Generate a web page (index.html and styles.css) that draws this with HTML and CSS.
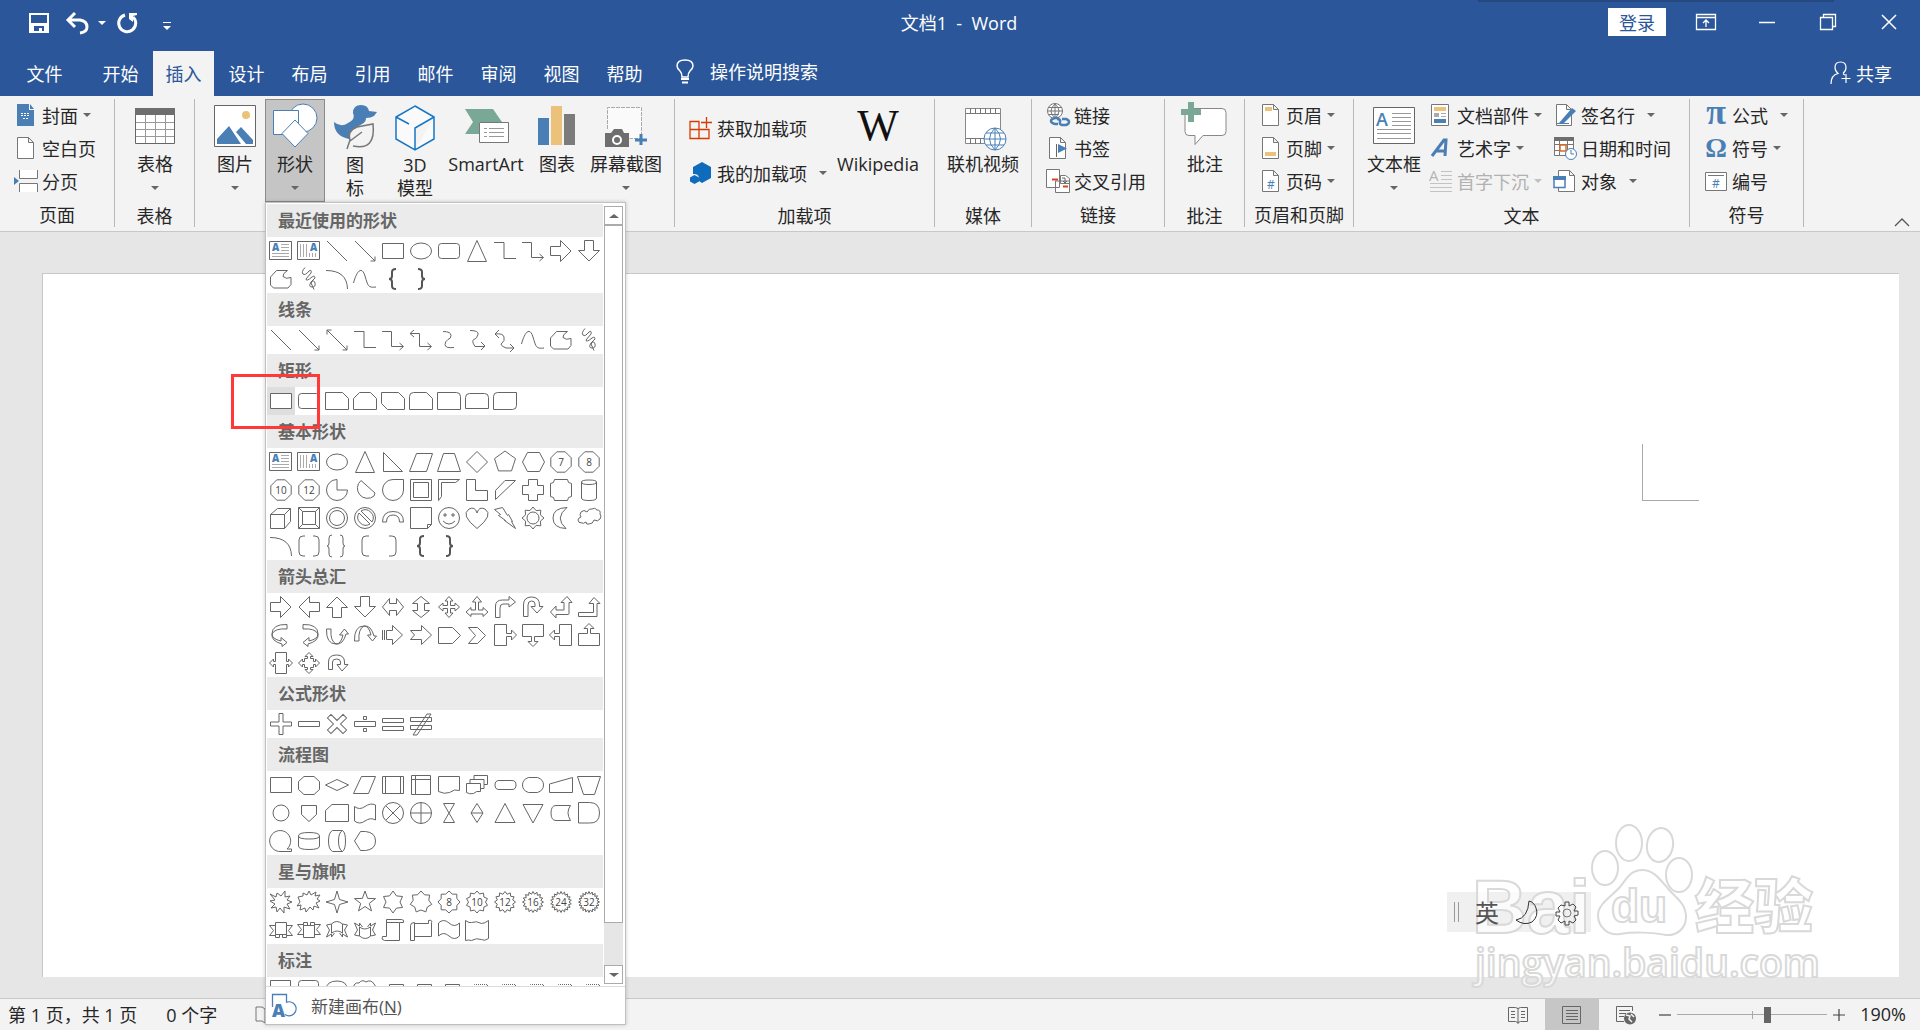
FILE: index.html
```
<!DOCTYPE html>
<html lang="zh-CN">
<head>
    <meta charset="UTF-8">
    <meta name="viewport" content="width=device-width, initial-scale=1.0">
    <title>文档1 - Word</title>
    <link rel="stylesheet" href="styles.css">
</head>
<body>
    <header class="titlebar">
        <div class="quick">
            <button type="button" aria-label="保存"><svg width="22" height="22" viewBox="0 0 22 22"><path d="M1 1h20v20H1z" fill="#fff"/><path d="M3 3h16v8H3zM6 14h10v5h-2v-3h-3v3H6z" fill="#2b579a"/></svg></button>
            <button type="button" aria-label="撤消"><svg width="24" height="22" viewBox="0 0 24 22"><path d="M2 8h12q7 1 7 7 0 5-7 6M9 1L2 8l7 7" fill="none" stroke="#fff" stroke-width="3"/></svg></button>
            <button type="button" class="narrow" aria-label="撤消列表"><span class="arrow"></span></button>
            <button type="button" aria-label="重复"><svg width="22" height="22" viewBox="0 0 22 22"><path d="M8 3A8.500 8.500 0 1 0 16 5" fill="none" stroke="#fff" stroke-width="3"/><path d="M12 1h8v2l-4 1v6l-4-3z" fill="#fff"/></svg></button>
            <button type="button" class="custom" aria-label="自定义快速访问工具栏"><svg width="10" height="10" viewBox="0 0 10 10"><path d="M1 1h8v1H1zM1 5h8L5 9z" fill="#fff"/></svg></button>
        </div>
        <div class="title">文档1&nbsp; -&nbsp; Word</div>
        <div class="window-buttons">
            <button type="button" class="login">登录</button>
            <button type="button" aria-label="功能区显示选项"><svg width="20" height="16" viewBox="0 0 20 16"><path d="M.5.500h19v15H.5zM.5 3.500h19M10 13V6M7 9l3-3 3 3" fill="none" stroke="#fff" stroke-width="1.300"/></svg></button>
            <button type="button" aria-label="最小化"><svg width="16" height="16" viewBox="0 0 16 16"><path d="M0 8.500h16" stroke="#fff" stroke-width="1.500"/></svg></button>
            <button type="button" aria-label="还原"><svg width="16" height="16" viewBox="0 0 16 16"><path d="M.5 3.500h12v12H.5zM3.500 3.500v-3h12v12h-3" fill="none" stroke="#fff" stroke-width="1.300"/></svg></button>
            <button type="button" aria-label="关闭"><svg width="16" height="16" viewBox="0 0 16 16"><path d="M1 1l14 14M15 1L1 15" stroke="#fff" stroke-width="1.500"/></svg></button>
        </div>
        <div class="top-shadow"></div>
    </header>

    <nav class="tabs">
        <button type="button" class="file">文件</button>
        <button type="button">开始</button>
        <button type="button" class="active">插入</button>
        <button type="button">设计</button>
        <button type="button">布局</button>
        <button type="button">引用</button>
        <button type="button">邮件</button>
        <button type="button">审阅</button>
        <button type="button">视图</button>
        <button type="button">帮助</button>
        <label class="search">
            <svg width="18" height="26" viewBox="0 0 18 26"><path d="M6 18q0-4-2-6-3-3-3-5 0-6 8-6t8 6q0 2-3 5-2 2-2 6z" fill="none" stroke="#fff" stroke-width="1.500"/><path d="M5 20h8M6 23.500h6" stroke="#fff" stroke-width="2"/></svg>
            <input type="text" placeholder="操作说明搜索" aria-label="操作说明搜索">
        </label>
        <button type="button" class="share"><svg width="22" height="24" viewBox="0 0 22 24"><path d="M1 23q0-9 7-10.500Q5 10 5 6.500 5 1 10.500 1T16 6.500q0 3.500-3 6M16 13v9M11.500 17.500h9M13 13l2 1" fill="none" stroke="#fff" stroke-width="1.200"/></svg>共享</button>
    </nav>

    <section class="ribbon">
        <div class="group pages">
            <div class="content">
                <div class="stack">
                    <button type="button"><svg class="small" viewBox="0 0 24 24"><path d="M3 1h12v6h5v16H3z" fill="#4a7fb5"/><path d="M16 1l4 5h-4z" fill="#4a7fb5"/><path d="M7 10.500h9M7 12.500h9M9 15.500h6" stroke="#fff" stroke-dasharray="2 1"/></svg>封面<span class="arrow"></span></button>
                    <button type="button"><svg class="small" viewBox="0 0 24 24"><path d="M3.500 1.500h11l5 5v16h-16zM14.500 1.500v5h5" class="sheet"/></svg>空白页</button>
                    <button type="button"><svg class="small" viewBox="0 0 24 24"><path d="M5.500 1v8.500h18V1M5.500 23v-8.500h18V23" class="sheet"/><path d="M0 8l5 4-5 4z" fill="#4a7fb5"/></svg>分页</button>
                </div>
            </div>
            <div class="caption">页面</div>
        </div>

        <div class="group table">
            <div class="content">
                <button type="button" class="big"><svg class="large" viewBox="0 0 48 48"><path d="M4.500 5.500h39v35h-39z" fill="#fff" stroke="#666"/><path d="M5 19.500h38M5 26.500h38M5 33.500h38M14.500 12v28M24.500 12v28M34.500 12v28" stroke="#999"/><path d="M4 5h40v7H4z" fill="#6e6e6e"/></svg>表格<span class="arrow"></span></button>
            </div>
            <div class="caption">表格</div>
        </div>

        <div class="group illustrations">
            <div class="content">
                <button type="button" class="big"><svg class="large" viewBox="0 0 48 48"><path d="M3.500 2.500h41v41h-41z" fill="#fff" stroke="#666"/><circle cx="35" cy="12" r="4" fill="#ecc27b"/><path d="M6 41V36L18 23l12 18zM25 29l5-5 12 13v4h-7z" fill="#4a7fb5"/></svg>图片<span class="arrow"></span></button>
                <div class="dropdown">
                    <button type="button" class="big open"><svg class="large" viewBox="0 0 48 48"><circle cx="32" cy="15" r="14" class="blueline"/><path d="M2.500 7.500h25v24h-25z" class="blueline"/><path d="M24 17l13 13.500L24 44 11 30.500z" class="blueline"/></svg>形状<span class="arrow"></span></button>
                    <div class="menu">
                        <div class="menu-main">
                            <div class="gallery" id="gallery"></div>
                            <div class="scrollbar">
                                <button type="button" aria-label="向上滚动"><span class="arrow up"></span></button>
                                <div class="thumb"></div>
                                <button type="button" aria-label="向下滚动"><span class="arrow"></span></button>
                            </div>
                        </div>
                        <button type="button" class="canvas"><svg width="26" height="26" viewBox="0 0 26 26"><path d="M1.500 14V1.500h14V9M15 9.500a7 7 0 1 1-1 12" fill="none" stroke="#4a7fb5" stroke-width="1.300"/><text x="1" y="24" font-size="18" font-weight="800" fill="#4a7fb5">A</text></svg><span>新建画布(<u>N</u>)</span></button>
                        <div class="marker"></div>
                    </div>
                </div>
                <button type="button" class="big wrap"><svg class="large" viewBox="0 0 48 48"><path d="M22 8q0-8 8-8 7 0 8 6l8 1-3 4q-3 2-8 2 0 4-4 6-8 4-13 15Q3 31 3 17q7 6 14 1 8-4 5-10z" fill="#4a7fb5"/><path d="M16 44l3-9q-3-9 7-13l16-3q3 27-20 22M19 36l12-9" fill="#f3f3f3" stroke="#777" stroke-width="1.500"/></svg>图<br>标</button>
                <button type="button" class="big wrap"><svg class="large" viewBox="0 0 48 48"><path d="M24 1l19 11v22L24 45 5 34V12zM43 12L24 23v22M5 12l13 7" fill="#fafafa" stroke="#1677c7" stroke-width="1.500"/></svg>3D<br>模型</button>
                <button type="button" class="big smart"><svg class="large" viewBox="0 0 48 48"><path d="M3 6h28l9 13H17v12H3l8-12z" fill="#79a996"/><path d="M17.500 19.500h29v20h-29z" fill="#fff" stroke="#777"/><path d="M22 25.500h3M22 29.500h3M22 33.500h3M27 25.500h15M27 29.500h15M27 33.500h15" stroke="#999"/></svg>SmartArt</button>
                <button type="button" class="big"><svg class="large" viewBox="0 0 48 48"><path d="M5 15h11v27H5z" fill="#4a7fb5"/><path d="M18 3h11v39H18z" fill="#ecc27b"/><path d="M31 11h11v31H31z" fill="#7b7b7b"/></svg>图表</button>
                <button type="button" class="big shot"><svg class="large" viewBox="0 0 48 48"><path d="M5.500 26V4.500h34v31h-12" fill="#fafafa" stroke="#aaa" stroke-dasharray="4 1"/><path d="M3 30h6l3-4h8l2 4h5v14H3z" fill="#6e6e6e"/><circle cx="15" cy="37" r="4" fill="#6e6e6e" stroke="#fff" stroke-width="2"/><path d="M33 37h12M39 31v11" stroke="#4a7fb5" stroke-width="3"/></svg>屏幕截图<span class="arrow"></span></button>
            </div>
            <div class="caption"></div>
        </div>

        <div class="group addins">
            <div class="content">
                <div class="stack loose">
                    <button type="button"><svg class="small" viewBox="0 0 24 24"><path d="M1 5.500h9v17H1zM1 13.500h19v9H1M17.500 1v11M12 6.500h11" fill="none" stroke="#d83b01" stroke-width="1.300"/></svg>获取加载项</button>
                    <button type="button"><svg class="small" viewBox="0 0 24 24"><path d="M13 1l9 5v11l-9 5-3-2q1-8-6-7V6z" fill="#0f6cbd"/><path d="M5.500 14l4.500 2.500v4L5.500 23 1 20.500v-4z" fill="#0f6cbd"/></svg>我的加载项<span class="arrow far"></span></button>
                </div>
                <button type="button" class="big wiki"><svg class="large" viewBox="0 0 48 48"><text x="24" y="37" text-anchor="middle" class="w">W</text></svg>Wikipedia</button>
            </div>
            <div class="caption">加载项</div>
        </div>

        <div class="group media">
            <div class="content">
                <button type="button" class="big"><svg class="large" viewBox="0 0 48 48"><path d="M6.500 5.500h35v35h-35z" fill="#fff" stroke="#888"/><path d="M6.500 10.500h35M6.500 35.500h20M11.500 5v5M16.500 5v5M21.500 5v5M26.500 5v5M31.500 5v5M36.500 5v5M11.500 36v5M16.500 36v5M21.500 36v5" stroke="#777"/><circle cx="36" cy="36" r="11" fill="#fff" stroke="#4a7fb5"/><path d="M25 36h22M36 25v22M36 25q-11 11 0 22M36 25q11 11 0 22M27 30h18M27 42h18" fill="none" stroke="#4a7fb5"/></svg>联机视频</button>
            </div>
            <div class="caption">媒体</div>
        </div>

        <div class="group links">
            <div class="content">
                <div class="stack">
                    <button type="button"><svg class="small" viewBox="0 0 24 24"><circle cx="9" cy="8" r="7.500" class="sheet"/><path d="M2 8h15M9 1v15M3 4.500h12M3 11.500h10M9 1q-8 7 0 14M9 1q8 7 0 14" fill="none" stroke="#777"/><path d="M12 21H9q-4-1-4-3t4-3h4M16 16h4q3 1 3 3t-3 3h-4q-3-1-2-3M11 16q4 0 3 3" fill="none" stroke="#4a7fb5" stroke-width="2.500"/></svg>链接</button>
                    <button type="button"><svg class="small" viewBox="0 0 24 24"><path d="M3.500 1.500h11l5 5v16h-16zM14.500 1.500v5h5" class="sheet"/><path d="M10.500 8v13" stroke="#666"/><path d="M12 8l9 4.500-9 4.500z" fill="#4a7fb5"/></svg>书签</button>
                    <button type="button"><svg class="small" viewBox="0 0 24 24"><path d="M.5.500h13v18H.5zM9.500 12h14v11.500h-14zM14.500 6.500h5l4 3v5h-9z" class="sheet"/><path d="M6 10.500h6M17 17.500h5" stroke="#d24726" stroke-width="2"/><path d="M16 9h3v5M17 12l2 2 2-2" fill="none" stroke="#666"/></svg>交叉引用</button>
                </div>
            </div>
            <div class="caption">链接</div>
        </div>

        <div class="group comments">
            <div class="content">
                <button type="button" class="big"><svg class="large" viewBox="0 0 48 48"><path d="M7 5.500h34q4 0 4 4v19q0 4-4 4H22l-8 9v-9H8q-4 0-4-4V10" fill="#fff" stroke="#888"/><path d="M7-1h6v7h7v6h-7v7H7v-7H0V6h7z" fill="#79a996"/></svg>批注</button>
            </div>
            <div class="caption">批注</div>
        </div>

        <div class="group headers">
            <div class="content">
                <div class="stack">
                    <button type="button"><svg class="small" viewBox="0 0 24 24"><path d="M4.500 1.500h11l5 5v16h-16zM15.500 1.500v5h5" class="sheet"/><path d="M7 4h7v4H7z" fill="#ecc27b"/></svg>页眉<span class="arrow"></span></button>
                    <button type="button"><svg class="small" viewBox="0 0 24 24"><path d="M4.500 1.500h11l5 5v16h-16zM15.500 1.500v5h5" class="sheet"/><path d="M7 16h11v4H7z" fill="#ecc27b"/></svg>页脚<span class="arrow"></span></button>
                    <button type="button"><svg class="small" viewBox="0 0 24 24"><path d="M4.500 1.500h11l5 5v16h-16zM15.500 1.500v5h5" class="sheet"/><text x="9" y="20" font-size="12" fill="#4a7fb5">#</text></svg>页码<span class="arrow"></span></button>
                </div>
            </div>
            <div class="caption">页眉和页脚</div>
        </div>

        <div class="group texts">
            <div class="content">
                <button type="button" class="big"><svg class="large" viewBox="0 0 48 48"><path d="M3.500 4.500h41v36h-41z" fill="#fff" stroke="#666"/><path d="M22 10.500h19M22 14.500h19M22 18.500h19M22 22.500h19M7 26.500h34M7 30.500h34M7 35.500h34" stroke="#999"/><text x="6" y="23" font-size="18" font-weight="600" fill="#4a7fb5">A</text></svg>文本框<span class="arrow"></span></button>
                <div class="stack parts">
                    <button type="button"><svg class="small" viewBox="0 0 24 24"><path d="M2.500 1.500h17v21h-17z" class="sheet"/><path d="M5 4h12v4H5z" fill="#ecc27b"/><path d="M5 10h5v4H5z" fill="#aaa"/><path d="M12 10.500h5M12 13.500h5" stroke="#aaa"/><path d="M5 16h12v4H5z" fill="#4a7fb5"/></svg>文档部件<span class="arrow"></span></button>
                    <button type="button"><svg class="small" viewBox="0 0 24 24"><path d="M3 20L15 4h2l-1 16M7 15h9" fill="none" stroke="#4a7fb5" stroke-width="3"/></svg>艺术字<span class="arrow"></span></button>
                    <button type="button" class="off" disabled><svg class="small" viewBox="0 0 24 24"><path d="M12 2.500h11M12 6.500h11M12 10.500h11M1 14.500h22M1 18.500h22M1 22.500h22" stroke="#c3c3c3"/><text x="0" y="12" font-size="15" fill="#b5b5b5">A</text></svg>首字下沉<span class="arrow"></span></button>
                </div>
                <div class="stack">
                    <button type="button"><svg class="small" viewBox="0 0 24 24"><path d="M3.500 1.500h10l5 5v16h-15zM13.500 1.500v5h5" class="sheet"/><path d="M6 20L19 5l4 3-13 13z" fill="#4a7fb5"/><path d="M4 20.500h12" stroke="#4a7fb5"/></svg>签名行<span class="arrow far"></span></button>
                    <button type="button"><svg class="small" viewBox="0 0 24 24"><path d="M1.500 3.500h19v16h-19zM1.500 8.500h19M1.500 14.500h19M6.500 4v16M14.500 4v16" class="sheet"/><path d="M1 1h20v4H1z" fill="#6e6e6e"/><path d="M7 9h6v6H7z" fill="#fff" stroke="#d86b28" stroke-width="1.500"/><circle cx="18" cy="18" r="5.500" fill="#fff" stroke="#4a7fb5"/><path d="M18 14v4h3" fill="none" stroke="#4a7fb5"/></svg>日期和时间</button>
                    <button type="button"><svg class="small" viewBox="0 0 24 24"><path d="M5.500 1.500h11l5 5v16h-16zM16.500 1.500v5h5" class="sheet"/><path d="M1 8.500h11v10H1z" fill="#fff" stroke="#4a7fb5" stroke-width="1.500"/><path d="M0 7h13v4H0z" fill="#4a7fb5"/></svg>对象<span class="arrow far"></span></button>
                </div>
            </div>
            <div class="caption">文本</div>
        </div>

        <div class="group symbols">
            <div class="content">
                <div class="stack">
                    <button type="button"><svg class="small" viewBox="0 0 24 24"><text x="12" y="21" text-anchor="middle" class="greek">π</text></svg>公式<span class="arrow far"></span></button>
                    <button type="button"><svg class="small" viewBox="0 0 24 24"><text x="12" y="21" text-anchor="middle" class="greek omega">Ω</text></svg>符号<span class="arrow"></span></button>
                    <button type="button"><svg class="small" viewBox="0 0 24 24"><path d="M1.500 3.500h21v18h-21zM4 6.500h16" class="sheet"/><text x="8" y="19" font-size="12" fill="#4a7fb5">#</text></svg>编号</button>
                </div>
            </div>
            <div class="caption">符号</div>
        </div>

        <button type="button" class="collapse" aria-label="折叠功能区"><svg width="16" height="10" viewBox="0 0 16 10"><path d="M1 9l7-7 7 7" fill="none" stroke="#555" stroke-width="1.300"/></svg></button>
    </section>

    <main class="workspace">
        <div class="page">
            <div class="corner"></div>
        </div>
        <svg class="watermark" width="390" height="180" viewBox="0 0 390 180">
            <path d="M7 77h144v40H7z" fill="#f0f0f0"/>
            <path d="M14.500 87v20M18.500 87v20" stroke="#999"/>
            <g class="logo">
                <text x="32" y="118" font-size="76">Bai</text>
                <ellipse cx="165" cy="53" rx="13" ry="17"/>
                <ellipse cx="189" cy="28" rx="13" ry="18"/>
                <ellipse cx="220" cy="30" rx="13" ry="17" transform="rotate(10 220 30)"/>
                <ellipse cx="239" cy="60" rx="13" ry="17"/>
                <path d="M202 55C215 55 221 66 230 76 238 84 246 90 246 102 246 114 236 121 226 120 212 117 192 117 180 119 168 121 158 112 158 100 158 89 172 81 180 72 187 63 191 55 202 55Z"/>
                <text x="171" y="107" font-size="46">du</text>
                <text x="255" y="113" font-size="59" class="cjk">经验</text>
                <text x="35" y="162" font-size="39" class="site">jingyan.baidu.com</text>
            </g>
            <text x="35" y="107" font-size="24" fill="#555">英</text>
            <path d="M89 86q-1 17-13 19 8 6 16 2 7-6 4-14-2-6-7-7z" fill="none" stroke="#333"/>
            <path d="M125 87h4v4l4-2 3 3-2 4h4v4l-4 1 2 4-3 3-4-2v4h-4v-4l-4 2-3-3 2-4h-4v-4h4l-2-4 3-3 4 1z" fill="none" stroke="#444"/>
            <circle cx="127" cy="98" r="4" fill="none" stroke="#777"/>
        </svg>
    </main>

    <footer class="status">
        <span>第 1 页，共 1 页</span>
        <span class="words">0 个字</span>
        <svg width="20" height="18" viewBox="0 0 20 18"><path d="M1 1h6l3 2 3-2h6v14h-6l-3 2-3-2H1zM10 3v14" fill="none" stroke="#777"/></svg>
        <div class="views">
            <button type="button" aria-label="阅读视图"><svg width="20" height="18" viewBox="0 0 20 18"><path d="M.5 1.500h7l2.500 1 2.500-1h7v14h-7l-2.500 1-2.500-1h-7zM10 2v16M3 5.500h4M3 8.500h4M3 11.500h4M13 5.500h4M13 8.500h4M13 11.500h4" fill="none" stroke="#666"/></svg></button>
            <button type="button" class="current" aria-label="页面视图"><svg width="20" height="18" viewBox="0 0 20 18"><path d="M.5.500h18v17H.5zM4 4.500h12M4 7.500h12M4 10.500h12M4 13.500h12" fill="none" stroke="#666"/></svg></button>
            <button type="button" aria-label="Web 版式视图"><svg width="20" height="20" viewBox="0 0 20 20"><path d="M8 16.500H.5v-15h16V6M3 5.500h11M3 8.500h7M3 11.500h5" fill="none" stroke="#666"/><circle cx="14" cy="13.500" r="6" fill="#666"/><path d="M10 10l4 1-1 3 3 3M15 9l3 3" fill="none" stroke="#f3f3f3" stroke-width="1.500"/></svg></button>
        </div>
        <button type="button" class="step" aria-label="缩小"><svg width="12" height="12" viewBox="0 0 12 12"><path d="M0 6h12" stroke="#444" stroke-width="1.200"/></svg></button>
        <input type="range" class="zoom" min="0" max="100" value="61" aria-label="显示比例">
        <button type="button" class="step" aria-label="放大"><svg width="12" height="12" viewBox="0 0 12 12"><path d="M0 6h12M6 0v12" stroke="#444" stroke-width="1.200"/></svg></button>
        <span class="percent">190%</span>
    </footer>

    <script>
        // Every shape is drawn in a 28 x 28 cell
        function num(n) {
            return '<text x="14" y="18" class="num">' + n + '</text>';
        }

        function path(d) {
            return '<path d="' + d + '"/>';
        }

        function polygon(n, r, start) {
            return star(n, r, r * Math.cos(Math.PI / n), start);
        }

        function star(n, outer, inner, start) {
            let d = '';
            for (let i = 0; i < n * 2; i++) {
                const r = i % 2 ? inner : outer;
                const a = (start || 0) - Math.PI / 2 + i * Math.PI / n;
                d += (i ? 'L' : 'M') + (14 + r * Math.cos(a)).toFixed(1) + ' ' + (14 + r * Math.sin(a)).toFixed(1);
            }
            return d + 'Z';
        }

        function turn(d, angle) {
            return '<path transform="rotate(' + angle + ' 14 14)" d="' + d + '"/>';
        }

        function flip(d) {
            return '<path transform="matrix(-1 0 0 1 28 0)" d="' + d + '"/>';
        }

        const textH = path('M2.5 4.500h22v18h-22z') + '<path class="light" d="M14 7.500h8M14 10.500h8M14 13.500h8M5 16.500h17M5 19.500h17"/><text x="5" y="14" class="letter">A</text>';
        const textV = path('M2.5 4.500h22v18h-22z') + '<path class="light" d="M5.5 7v13M8.500 7v13M11.500 7v13M14.500 16v4M17.500 16v4M20.500 16v4"/><text x="15" y="14" class="letter">A</text>';
        const line = 'M4 4L24 24';
        const lineArrow = 'M4 4L24 24M24 19.500V24H19.500';
        const rect = 'M3.5 6.500h21v15h-21z';
        const ellipse = 'M3.500 14a10.500 8 0 1 0 21 0a10.500 8 0 1 0-21 0z';
        const round = 'M6.500 6.500h15q3 0 3 3v9q0 3-3 3h-15q-3 0-3-3v-9q0-3 3-3z';
        const triangle = 'M14 3.500L23.500 24.500h-19z';
        const elbow = 'M3 5.500h10v16h12';
        const elbowArrow = 'M3 5.500h9.500v15H24M20.500 17l4 3.500-4 3.500';
        const elbowDouble = 'M3 7.500h9.500v13H24M20.500 17l4 3.500-4 3.500M7 4L3 7.500 7 11';
        const right = 'M3.500 9.500h10v-6L24 14 13.500 24.500v-6h-10z';
        const freeform = 'M3.500 12l6-6.500h11q-5 3-4.500 6 3 3 8 1v7l-3 3.500H6.500l-3-3z';
        const scribble = 'M10 2.500Q6 7 8 9T14 6Q17 4 16 8L11 14Q11 17 17 12 20 10 20 13L16 17Q13 22 17 22T20 18 16 18L19 24.500';
        const arc = 'M3 5.500Q24 5.500 24.500 24';
        const curve = 'M2.500 18C6 5 11 1 14 11S17 23 25 22';
        const braceL = '<path class="heavy" d="M17 4q-4 0-4 3v4q0 3-3 3 3 0 3 3v4q0 3 4 3"/>';
        const braceR = '<path class="heavy" d="M11 4q4 0 4 3v4q0 3 3 3-3 0-3 3v4q0 3-4 3"/>';
        const circle = 'M3.500 14a10.500 10.500 0 1 0 21 0a10.500 10.500 0 1 0-21 0z';
        const octagon = polygon(8, 11, Math.PI / 8);
        const bent = 'M4.500 24.500V13q0-6 7-6H18V3.500L24.500 9 18 14V11h-6q-3 0-3 4v9.500z';
        const uturn = 'M4.500 23.500V12q0-8 8-8t8 8v1.500h3.500L18 20l-6-6.500h4V11q0-3-3.500-3T9 12v11.500z';
        const uturnLow = 'M5.500 20.500V13q0-7 8-7t8 7v2.500h3.500L19 22l-5-6.500h3.500V13q0-3-4-3t-4 3v7.500z';
        const curved = 'M20 3.500Q5 3 5 13q0 5 9 7v-3.500l6 5-5 4v-2.500Q4 20 5 13q3-6 15-5z';
        const wave = 'M3.500 7.500q5 4 10.500 0t10.500-1.500v15q-5-3-10.500 1t-10.500 0z';
        const callout = 'M3.500 3.500h12v9h5V9l5 5-5 5v-3.500h-5v9h-12z';
        const ribbonShape = 'M8.500 19.500h-6l4-5-4-5h6M19.500 19.500h6l-4-5 4-5h-6M8.500 6.500h11v12h-11zM8.500 18.500v3h4v-3M19.500 18.500v3h-4v-3';
        const ribbonArc = 'M8.500 8q5-5 11 0v9q-5-4-11 0zM8.500 8l-5 1 3 5-3 7 5-3v3l3-4M19.500 8l5 1-3 5 3 7-5-3v3l-3-4';
        const lineBox = 'M10.500 20V7.500h14V20';
        const dotBox = '<path class="dots" d="M11.500 20V7.500h13V20"/>';

        const sections = [
            ['最近使用的形状', [textH, textV, line, lineArrow, rect, ellipse, round, triangle, elbow, elbowArrow, right, turn(right, 90), freeform, scribble, arc, curve, braceL, braceR]],
            ['线条', [line, lineArrow, lineArrow + 'M4 8.500V4h4.500', elbow, elbowArrow, elbowDouble, 'M8 5.500q8 0 8 4 0 3-3 4-3 2-3 5 0 4 9 3', 'M7 4.500q9 0 8 4t-4 5 1 7h10M18 16l4 4-4 4', 'M4 8q8-1 9 3t-2 6 4 5h8M8 4L4 8l4 4M19 18l4 4-4 4', curve, freeform, scribble]],
            ['矩形', [rect, round, 'M2.500 5.500h17l6 6v11h-23z', 'M2.500 11.500l6-6h11l6 6v11h-23z', 'M2.500 5.500h17l6 6v11h-17l-6-6z', 'M2.500 9.500q0-4 4-4h13l6 6v11h-23z', 'M2.500 5.500h19q4 0 4 4v13h-23z', 'M6.500 6.500h15q4 0 4 4v11h-23v-11q0-4 4-4z', 'M6.500 5.500h19v13q0 4-4 4h-19v-13q0-4 4-4z']],
            ['基本形状', [
                textH, textV, ellipse, triangle, 'M4.500 4.500v19h19z', 'M9.500 5.500h16l-6 18h-17z', 'M8.500 5.500h11l6 18h-23z', 'M14 3.500L24.500 14 14 24.500 3.500 14z', polygon(5, 11), 'M8.500 4.500h12L25.500 14l-5 9.500h-12L3.500 14z', path(octagon) + num(7), path(octagon) + num(8),
                path(octagon) + num(10), path(octagon) + num(12), 'M14 3.500A10.500 10.500 0 1 0 24.500 14H14z', 'M10 4.500A10 10 0 1 0 23 20L24 17z', 'M24.500 3.500v10.500a10.500 10.500 0 1 1-10.500-10.500z', 'M3.500 3.500h21v21h-21zM6.500 6.500h15v15h-15z', 'M3.500 3.500h21l-4 3h-14v14l-3 4z', 'M3.500 3.500h9v11h12v10h-21z', 'M14 4.500h10.500L4.500 23.500v-9z', 'M9.500 3.500h9v6h6v9h-6v6h-9v-6h-6v-9h6z', 'M7.500 3.500h13q0 4 4 4v13q-4 0-4 4h-13q0-4-4-4v-13q4 0 4-4z', 'M6.500 6q0-2 7.500-2t7.500 2v16q0 2.500-7.500 2.500T6.500 22zM6.500 6q0 2.500 7.500 2.500T21.500 6',
                'M3.500 10.500l7-6h13v13l-6 7h-14zM3.500 10.500h14v14M17.500 10.500l6-6', 'M3.500 3.500h21v21h-21zM7.500 7.500h13v13h-13zM3.500 3.500l4 4M24.500 3.500l-4 4M3.500 24.500l4-4M24.500 24.500l-4-4', circle + 'M6.500 14a7.500 7.500 0 1 0 15 0a7.500 7.500 0 1 0-15 0z', circle + 'M8 9l11 11M10 7l11 11M8 9a8 8 0 0 0 11 11M10 7a8 8 0 0 1 11 11', 'M3.500 18q0-10.500 10.500-10.500T24.500 18h-4q0-7-6.500-7T7.500 18z', 'M3.500 3.500h21v17l-4 4h-17zM20.500 24.500v-4h4', circle + 'M8 17q6 6 12 0M9 10h2v2H9zM17 10h2v2h-2z', 'M14 24.500Q-3 11 6 5q6-3 8 4 2-7 8-4 9 6-8 19.500z', 'M3.500 5.500l8-2 5 8 1-1 4 7h-1l4 7-11-8h1l-7-5 2-1z', 'M8 14a6 6 0 1 0 12 0a6 6 0 1 0-12 0z' + star(8, 11, 8), 'M20 3.500Q6 4 6 14t13 10.500Q7 14 20 3.500z', 'M7 19q-4 0-4-3 0-2 3-3-2-2 0-5 3-3 6 0 2-4 5-3 3-2 5 1 4 0 3 4 2 2 0 5-2 3-6 1-1 4-5 4-3 1-3-2-3 2-4 1z',
                arc, 'M10 4H8q-4 0-4 4v12q0 4 4 4h2M18 4h2q4 0 4 4v12q0 4-4 4h-2', 'M9 3q-3 0-3 3v5q0 3-2 3 2 0 2 3v5q0 3 3 3M17 3q3 0 3 3v5q0 3 2 3-2 0-2 3v5q0 3-3 3', 'M18 4h-3q-4 0-4 4v12q0 4 4 4h3', 'M10 4h3q4 0 4 4v12q0 4-4 4h-3', braceL, braceR]],
            ['箭头总汇', [
                right, turn(right, 180), turn(right, -90), turn(right, 90), 'M3.500 14l7-8.500v5h7v-5l7 8.500-7 8.500v-5h-7v5z', turn('M3.500 14l7-8.500v5h7v-5l7 8.500-7 8.500v-5h-7v5z', 90), 'M14 3.500l4 4.500h-2.500v4.500H20V10l4.500 4-4.500 4v-2.500h-4.500V20H18l-4 4.500-4-4.500h2.500v-4.500H8V18l-4.500-4L8 10v2.500h4.500V8H10z', 'M14 3.500l4.500 5.500h-3v8H20v-2.500l5 4.500-5 4.500V21H8v2.500L3 19l5-4.500V17h4.500V9h-3z', bent, uturn, 'M20 3.500l5 6h-3v11q0 1-1 1H9V25l-5.500-6L9 13v4h8V9.500h-3z', 'M19 4.500l6 6h-3v13H3.500v-4h15v-9H14z',
                curved, flip(curved), turn(curved, -90), '<g transform="matrix(1 0 0 -1 0 28)">' + turn(curved, -90) + '</g>', 'M3.500 9v10M5.500 9v10M7.500 9.500h6v-5l10 9.500-10 9.500v-5h-6z', 'M3.500 9.500h11v-5l10 9.500-10 9.500v-5h-11l4-4.500z', 'M3.500 6.500h14l8 8-8 8h-14z', 'M5.500 6.500h9l8 8-8 8h-9l7-8z', callout, turn(callout, 90), turn(callout, 180), turn(callout, -90),
                'M8.500 3.500h11v9h2V10l4 4-4 4v-2.500h-2v9h-11v-9h-2V18l-4-4 4-4v2.500h2z', 'M14 3.500l4 4h-2.500v2H18.500v3h2V10l4 4-4 4v-2.500h-2v3h-3v2H18l-4 4-4-4h2.500v-2h-3v-3h-2V18l-4-4 4-4v2.500h2v-3h3v-2H10z', uturnLow]],
            ['公式形状', ['M12 3.500h4v8.500h8.500v4H16v8.500h-4V16H3.500v-4H12z', 'M3.500 11.500h21v5h-21z', turn('M11.500 3h5v8.500H25v5h-8.500V25h-5v-8.500H3v-5h8.500z', 45), 'M3.500 11.500h21v5h-21zM12.500 6.500h3v3h-3zM12.500 18.500h3v3h-3z', 'M3.500 8.500h21v4h-21zM3.500 16.500h21v4h-21z', 'M3.500 7.500h21v4h-21zM3.500 15.500h21v4h-21zM20 4h4L10 25H6z']],
            ['流程图', [
                rect, 'M9 5.500h10l5.500 5v8l-5.500 5H9l-5.500-5v-8z', 'M2.500 14L14 8.500 25.500 14 14 19.500z', 'M10.500 5.500h14l-7 17h-15z', 'M3.500 5.500h21v17h-21zM6.500 5.500v17M21.500 5.500v17', 'M4.500 4.500h19v19h-19zM8.500 4.500v19M4.500 8.500h19', 'M3.500 5.500h21v14q-5-2-10 2-5 2-11-1z', 'M3.500 12.500h14v8q-4-1-7 2-4 1-7-1zM7 12V8.500h14v9h-3M11 8V4.500h13.500v9H21', 'M8 9.500h13q4 0 4 4.500t-4 4.500H8q-4 0-4-4.500t4-4.500z', 'M9.500 6.500h9q6 2 6 7.500t-6 7.500h-9q-6-2-6-7.500t6-7.500z', 'M2.500 13L25.500 6.500v15h-23z', 'M2.500 5.500h23l-6 18h-11z',
                'M6 14a8 8 0 1 0 16 0a8 8 0 1 0-16 0z', 'M6.500 6.500h15v9L14 22.500l-7.500-7z', 'M9 5.500h16.500v17h-23v-11z', wave, circle + 'M7 7l14 14M21 7L7 21', circle + 'M14 3.500v21M3.500 14h21', 'M8.500 4.500h11l-11 19h11z', 'M14 4.500L20 14l-6 9.500L8 14zM8 14h12', 'M14 4.500L24 23.500H4z', 'M4 5.500h20L14 24z', 'M9 6.500h14.500q-5 7 0 15H9q-5 0-5-7.500t5-7.500z', 'M3.500 3.500h11q10 0 10 10.500t-10 10h-11z',
                'M24.500 22v2.500H14A10.500 10.500 0 1 1 20 22z', 'M3.500 9q0-3.500 10.500-3.500T24.500 9v10q0 3.500-10.500 3.500T3.500 19zM3.500 9q0 3 10.500 3t10.500-3', 'M9.500 3.500h10q3 2 3 10.500t-3 10.500h-10q-4-2-4-10.500t4-10.500zM19.500 3.500q-4 2-4 10.500t4 10.500', 'M9.500 4.500h5q10 1 10 9.500t-10 9.500h-5L3.500 14z']],
            ['星与旗帜', [
                'M3 6l6 3 1-4 4 3 4-5v6l5-1-3 4 5 2-5 2 3 5-6-2v6l-4-5-3 4-1-5-5 1 4-4-5-3 5-1z', 'M3 9l5-1 0-3 4 2 2-4 2 4 5-3-1 4 5-1-3 4 3 2-4 2 3 5-5-2-1 4-3-3-4 5-1-4-5 2 1-5-4 1 3-4z', star(4, 11, 3.500), star(5, 11, 4.500), star(6, 11, 7), star(7, 11, 8), path(star(8, 11, 8.500)) + num(8), path(star(10, 11, 8.500)) + num(10), path(star(12, 10.500, 8)) + num(12), path(star(16, 10.500, 8)) + num(16), path(star(18, 10.500, 8)) + num(24), path(star(20, 10.500, 8)) + num(32),
                ribbonShape, turn(ribbonShape, 180), ribbonArc, turn(ribbonArc, 180), 'M7.500 3.500h15q3 0 2 3h-4v18h-15q-4-1-2-4h4v-17M7.500 6.500h13', 'M3.500 24.500v-15q0-3 4-3v18zM7.500 7.500h14v-3q4-1 3 2v14h-17', 'M3.500 7q5-5 10.500 0t10.500 0v13q-5 5-10.500 0t-10.500 0z', 'M2.500 4.500q4 3 6 2 5-2 10 1 3 0 7-3v18q-4 3-7 1-5-2-10 1-3-1-6 0z']],
            ['标注', ['M3.500 3.500h20v14h-20z', 'M6.500 3.500h14q3 0 3 3v12h-20v-12q0-3 3-3z', 'M3 12q1-8 11-8t10 8v5H3z', 'M3 12V8q2-3 5-2 3-4 7-1 5-3 8 2 3 2 1 6z', lineBox, lineBox, lineBox, dotBox, dotBox, dotBox, dotBox, dotBox]]
        ];

        let html = '';
        sections.forEach(function (section) {
            html += '<h2>' + section[0] + '</h2><div class="shapes">';
            section[1].forEach(function (shape, i) {
                const chosen = section[0] === '矩形' && i === 0 ? ' class="chosen"' : '';
                html += '<button type="button"' + chosen + ' aria-label="' + section[0] + ' ' + (i + 1) + '"><svg width="28" height="28" viewBox="0 0 28 28">' + (shape[0] === '<' ? shape : path(shape)) + '</svg></button>';
            });
            html += '</div>';
        });
        document.getElementById('gallery').innerHTML = html;
    </script>
</body>
</html>
```

FILE: styles.css
```
* {
    box-sizing: border-box;
}

body {
    font-family: "Open Sans", "Noto Sans CJK SC", sans-serif;
    font-size: 18px;
    color: #262626;
    background-color: #e6e6e6;
    margin: 0;
    min-height: 100vh;
    display: flex;
    flex-direction: column;
}

button {
    font: inherit;
    color: inherit;
    background: none;
    border: none;
    padding: 0;
    margin: 0;
    white-space: nowrap;
}

svg {
    display: block;
    flex: none;
    overflow: visible;
}

/* title bar */
.titlebar {
    position: relative;
    height: 51px;
    background-color: #2b579a;
    color: white;
    display: grid;
    grid-template-columns: 1fr auto 1fr;
    padding-bottom: 8px;
}

.top-shadow {
    position: absolute;
    top: 0;
    right: 86px;
    width: 356px;
    height: 2px;
    background-color: #24487f;
}

.quick {
    display: flex;
    align-items: center;
    padding-left: 28px;
    gap: 16px;
}

.quick .narrow {
    margin: 0 -5px 0 -8px;
}

.quick .custom {
    margin-left: 7px;
    margin-top: 6px;
}

.quick .arrow {
    border-top-color: white;
}

.title {
    line-height: 46px;
    padding-right: 2px;
}

.window-buttons {
    display: flex;
    justify-content: flex-end;
    align-items: center;
    padding: 0 1px 2px 0;
}

.window-buttons button {
    width: 61px;
    height: 40px;
    display: flex;
    align-items: center;
    justify-content: center;
}

.window-buttons .login {
    width: 58px;
    height: 28px;
    margin-right: 9px;
    background-color: white;
    color: #2b579a;
}

/* tabs */
.tabs {
    height: 45px;
    background-color: #2b579a;
    color: white;
    display: flex;
}

.tabs button {
    width: 61px;
    margin: 0 1px;
    padding-bottom: 2px;
}

.tabs .file {
    width: 89px;
    margin: 0;
}

.tabs .active {
    background-color: #f3f3f3;
    color: #2b579a;
}

.search {
    display: flex;
    align-items: center;
    gap: 16px;
    margin-left: 20px;
    padding-bottom: 3px;
}

.search input {
    font: inherit;
    width: 180px;
    padding: 0;
    border: none;
    background: none;
    color: white;
}

.search input::placeholder {
    color: white;
    opacity: 1;
}

.tabs .share {
    width: auto;
    margin: 0 28px 0 auto;
    display: flex;
    align-items: center;
    gap: 4px;
}

/* ribbon */
.ribbon {
    display: flex;
    height: 136px;
    background-color: #f3f3f3;
    border-bottom: 1px solid #c8c8c8;
    padding: 3px 10px 4px 0;
}

.group {
    flex: none;
    display: flex;
    flex-direction: column;
    border-right: 1px solid #b8b8b8;
}

.content {
    display: flex;
    height: 103px;
}

.caption {
    text-align: center;
    line-height: 24px;
    padding-top: 2px;
}

.pages { width: 115px; }
.table { width: 80px; }
.illustrations { width: 480px; }
.addins { width: 260px; }
.media { width: 97px; }
.links { width: 133px; }
.comments { width: 80px; }
.headers { width: 109px; }
.texts { width: 336px; }
.symbols { width: 114px; }

.pages .content { padding-left: 14px; }
.table .content,
.illustrations .content,
.comments .content,
.texts .content { padding-left: 10px; }
.addins .content,
.links .content,
.symbols .content { padding-left: 14px; }
.headers .content { padding-left: 13px; }

.stack {
    display: flex;
    flex-direction: column;
    align-items: flex-start;
}

.stack button {
    height: 33px;
    padding-bottom: 2px;
    display: flex;
    align-items: center;
    gap: 4px;
}

.stack .arrow {
    margin-left: 1px;
}

.stack .arrow.far {
    margin-left: 8px;
}

.loose {
    padding-top: 7px;
}

.loose button {
    height: 45px;
}

.parts {
    padding-left: 5px;
    width: 129px;
}

.off {
    color: #b1b1b1;
}

.small {
    width: 24px;
    height: 24px;
}

.large {
    width: 48px;
    height: 48px;
    margin-bottom: 2px;
}

.big {
    width: 60px;
    height: 103px;
    padding-top: 4px;
    display: flex;
    flex-direction: column;
    align-items: center;
    line-height: 22px;
}

.big .arrow {
    margin-top: 11px;
}

.wrap {
    display: block;
    line-height: 23px;
    text-align: center;
}

.wrap .large {
    margin: 0 auto 1px;
}

.smart { width: 82px; }
.shot { width: 78px; }
.media .big { width: 96px; }

.wiki {
    width: 88px;
    margin-left: auto;
    margin-right: 12px;
}

.open {
    background-color: #c5c5c5;
    border: 1px solid #8a8a8a;
    padding-top: 3px;
}

.arrow {
    display: block;
    width: 0;
    height: 0;
    border: 4px solid transparent;
    border-top: 4px solid #666;
    border-bottom: none;
}

.off .arrow {
    border-top-color: #c0c0c0;
}

.arrow.up {
    border-top: none;
    border-bottom: 4px solid #666;
}

.collapse {
    align-self: flex-end;
    margin-left: auto;
}

.sheet {
    fill: white;
    stroke: #777;
}

.blueline {
    fill: white;
    stroke: #4a7fb5;
}

.w {
    font-family: "Liberation Serif", serif;
    font-size: 44px;
    fill: #111;
}

.greek {
    font-family: "Liberation Serif", serif;
    font-size: 36px;
    font-weight: bold;
    fill: #4a7fb5;
}

.omega {
    font-size: 27px;
}

/* shapes menu */
.dropdown {
    position: relative;
}

.menu {
    position: absolute;
    z-index: 2;
    top: 100%;
    left: 0;
    width: 361px;
    background-color: white;
    border: 1px solid #c0c0c0;
    box-shadow: 0 0 4px rgba(0, 0, 0, 0.2);
}

.menu-main {
    display: flex;
    gap: 1px;
    padding: 1px 2px 0 1px;
    border-bottom: 1px solid #dcdcdc;
}

.gallery {
    width: 336px;
    height: 782px;
    overflow: hidden;
}

.gallery h2 {
    margin: 0;
    padding-left: 11px;
    font-size: 17px;
    line-height: 33px;
    color: #666;
    background-color: #ebebeb;
}

.shapes {
    display: grid;
    grid-template-columns: repeat(12, 28px);
}

.shapes button {
    height: 28px;
}

.shapes .chosen {
    background-color: #dedede;
}

.shapes path {
    fill: white;
    stroke: #666;
}

/* open lines and shapes with inner strokes stay unfilled */
.shapes path:not(:only-child),
.shapes svg > path {
    fill: none;
}

.shapes .chosen path {
    fill: white;
}

.shapes .light {
    stroke: #aaa;
}

.shapes .heavy {
    stroke: #555;
    stroke-width: 2;
}

.shapes .dots {
    stroke-dasharray: 1 1;
}

.letter {
    font-size: 10px;
    font-weight: 800;
    fill: #4a7fb5;
}

.num {
    font-size: 10px;
    text-anchor: middle;
    fill: #444;
}

.scrollbar {
    width: 19px;
    margin: 2px 0;
    display: flex;
    flex-direction: column;
    background-color: #e6e6e6;
}

.scrollbar button {
    height: 19px;
    border: 1px solid #ababab;
    background-color: white;
    display: flex;
    align-items: center;
    justify-content: center;
}

.scrollbar .arrow {
    border-left-width: 5px;
    border-right-width: 5px;
}

.thumb {
    flex: 1;
    margin-bottom: 42px;
    background-color: white;
    border: 1px solid #ababab;
}

.canvas {
    width: 100%;
    height: 37px;
    padding-left: 5px;
    display: flex;
    align-items: center;
    gap: 14px;
    font-size: 17px;
    color: #555;
}

.marker {
    position: absolute;
    top: 171px;
    left: -35px;
    width: 89px;
    height: 55px;
    border: 3px solid #ff3838;
}

/* document */
.workspace {
    flex: 1;
    position: relative;
    display: flex;
    padding: 41px 21px 21px 42px;
}

.page {
    flex: 1;
    position: relative;
    background-color: white;
    border: solid #c8c8c8;
    border-width: 1px 0 0 1px;
}

.corner {
    position: absolute;
    top: 170px;
    right: 200px;
    width: 57px;
    height: 57px;
    border: solid #aaa;
    border-width: 0 0 1px 1px;
}

.watermark {
    position: absolute;
    right: 90px;
    bottom: 3px;
}

.logo {
    fill: rgba(255, 255, 255, 0.7);
    stroke: #d9d9d9;
    stroke-width: 2px;
    font-family: "Liberation Sans", sans-serif;
    font-weight: bold;
}

.logo .cjk {
    font-family: "Noto Sans CJK SC", sans-serif;
    font-weight: 900;
}

.logo .site {
    font-family: "Open Sans", sans-serif;
    font-weight: 600;
}

/* status bar */
.status {
    height: 32px;
    border-top: 1px solid #c8c8c8;
    background-color: #f3f3f3;
    display: flex;
    align-items: center;
    padding: 0 14px 0 8px;
}

.status span {
    padding-bottom: 2px;
}

.words {
    margin: 0 38px 0 29px;
}

.views {
    margin-left: auto;
    display: flex;
    align-self: stretch;
}

.views button {
    width: 54px;
    display: flex;
    align-items: center;
    justify-content: center;
}

.views .current {
    background-color: #c6c6c6;
}

.step {
    margin-left: 6px;
}

.zoom {
    appearance: none;
    width: 150px;
    height: 16px;
    margin: 0 0 0 6px;
    background: linear-gradient(#aaa, #aaa) center / 100% 1px no-repeat, linear-gradient(#aaa, #aaa) center / 1px 8px no-repeat;
}

.zoom::-webkit-slider-thumb {
    appearance: none;
    width: 7px;
    height: 16px;
    background-color: #666;
}

.percent {
    margin-left: 15px;
}
```
